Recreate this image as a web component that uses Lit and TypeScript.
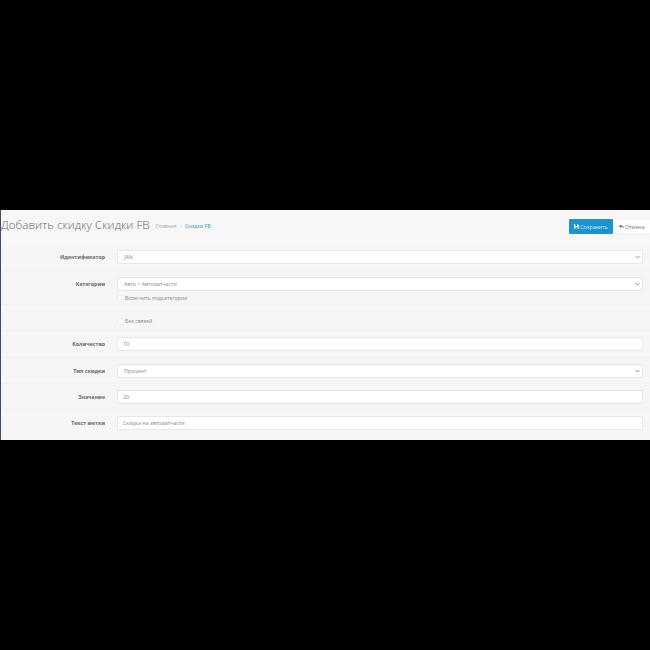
import { LitElement, html, css } from "lit";
import { customElement } from "lit/decorators.js";

const chevron = html`<svg class="chev" viewBox="0 0 8 5" width="5" height="4"><path d="M1 1l3 3 3-3" fill="none" stroke="#666" stroke-width="1.2"/></svg>`;

@customElement("app-root")
export class AppRoot extends LitElement {
  static styles = css`
    :host { display: block; width: 650px; height: 650px; background: #000; font-family: "Open Sans", "DejaVu Sans", sans-serif; overflow: hidden; }
    .band { height: 210px; }
    .panel { height: 230px; box-sizing: border-box; background: #f6f6f6; border-left: 1px solid #3f4d5c; display: flex; flex-direction: column; }
    .head { height: 34px; flex: none; display: flex; align-items: center; background: #f7f7f7; padding-bottom: 6px; box-sizing: border-box; }
    h1 { margin: 0; font-size: 11.7px; font-weight: 300; color: #666; line-height: 20px; white-space: nowrap; }
    .crumb { margin-left: 6px; font-size: 5.25px; color: #aaa; padding-top: 3px; white-space: nowrap; }
    .crumb a { color: #1e91cf; }
    .crumb i { font-style: normal; color: #bbb; padding: 0 2px; }
    .btns { margin-left: auto; display: flex; gap: 1px; margin-top: 5px; }
    .btn { height: 15px; box-sizing: border-box; display: flex; align-items: center; gap: 1px; font-size: 5.25px; border-radius: 1px; }
    .save { width: 44px; justify-content: center; background: #1e91cf; color: #dff0fa; }
    .cancel { width: 36px; padding-left: 4px; background: #fff; color: #777; border: 1px solid #f0f0f0; border-right: 0; }
    .row { display: grid; grid-template-columns: 104px 526px; column-gap: 12px; padding-top: 6px; box-sizing: border-box; border-top: 1px solid #f2f2f2; }
    .row.first { border-top: 0; height: 26px; }
    .r26 { height: 26px; }
    .r27 { height: 27px; }
    .r33 { height: 34px; }
    .r26.plain { padding-top: 9px; }
    label { font-size: 5.25px; font-weight: 700; color: #666; text-align: right; line-height: 14px; white-space: nowrap; }
    .field { height: 14px; box-sizing: border-box; background: #fff; border: 1px solid #e6e6e6; border-radius: 1px; display: flex; align-items: center; justify-content: space-between; padding: 0 2px 0 5px; font-size: 5.25px; color: #888; white-space: nowrap; }
    .field.sel { padding-left: 6px; }
    .chev { flex: none; }
    .check { display: flex; align-items: center; gap: 1px; height: 14px; font-size: 5.25px; color: #888; white-space: nowrap; }
    .box { width: 5px; height: 5px; background: #fbfbfb; border: 1px solid #f0f0f0; border-radius: 1px; }
    svg.ic { flex: none; }
  `;

  render() {
    return html`
      <div class="band"></div>
      <div class="panel">
        <div class="head">
          <h1>Добавить скидку Скидки FB</h1>
          <div class="crumb">Главная<i> › </i><a>Скидки FB</a></div>
          <div class="btns">
            <div class="btn save"><svg class="ic" viewBox="0 0 8 8" width="5" height="5"><path d="M0 0h6l2 2v6H0z M2 0v3h3V0z M2 5v3h4V5z" fill="#dff0fa" fill-rule="evenodd"/></svg>Сохранить</div>
            <div class="btn cancel"><svg class="ic" viewBox="0 0 8 8" width="5" height="5"><path d="M3 1L0 3.500 3 6V4.500c2 0 3.500.5 5 2.500C7.500 4 6 2.500 3 2.500z" fill="#555"/></svg>Отмена</div>
          </div>
        </div>
        <div class="row first"><label>Идентификатор</label><div class="field sel">JAN${chevron}</div></div>
        <div class="row r33"><label>Категории</label><div><div class="field sel">Авто &gt; Автозапчасти${chevron}</div><div class="check"><span class="box"></span>Включить подкатегории</div></div></div>
        <div class="row r26 plain"><label></label><div class="check"><span class="box"></span>Без связей</div></div>
        <div class="row r27"><label>Количество</label><div class="field">10</div></div>
        <div class="row r26"><label>Тип скидки</label><div class="field sel">Процент${chevron}</div></div>
        <div class="row r26"><label>Значение</label><div class="field">20</div></div>
        <div class="row r27"><label>Текст метки</label><div class="field">Скидка на автозапчасти</div></div>
      </div>
    `;
  }
}
